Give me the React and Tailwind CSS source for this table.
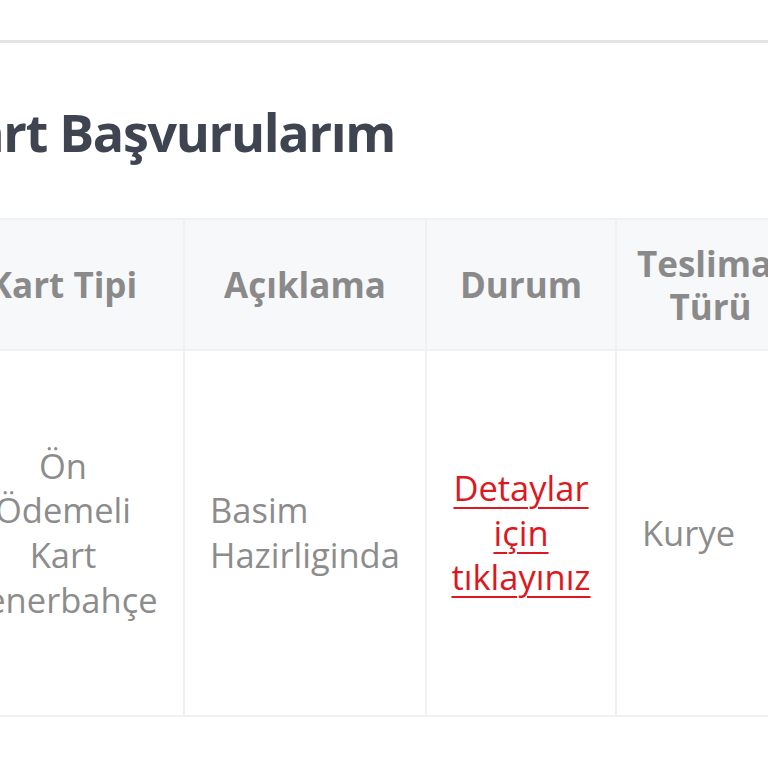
import React from "react";

export default function App() {
  const font = { fontFamily: '"Open Sans", "Noto Sans", sans-serif' };
  return (
    <div className="w-[768px] h-[768px] overflow-hidden bg-white" style={font}>
      <div className="h-[43px] border-b-[3px] border-[#e4e4e4]" />
      <div className="ml-[-60px] w-[900px]">
        <h1 className="mt-[63px] text-[52px] leading-none font-bold text-[#3e4551] tracking-[-1.3px]">
          Kart Başvurularım
        </h1>
      </div>
      <div className="ml-[-59px] mt-[60px]">
        <table className="border-collapse table-fixed w-[863px]">
          <colgroup>
            <col className="w-[242px]" />
            <col className="w-[242px]" />
            <col className="w-[190px]" />
            <col className="w-[189px]" />
          </colgroup>
          <thead>
            <tr className="h-[131px] bg-[#f7f8fa]">
              {["Kart Tipi", "Açıklama", "Durum", "Teslimat Türü"].map((h) => (
                <th
                  key={h}
                  className="border-2 border-[#f0f1f3] px-[20px] text-center align-middle text-[35px] leading-[43px] font-bold text-[#8a8a8a]"
                >
                  {h}
                </th>
              ))}
            </tr>
          </thead>
          <tbody>
            <tr className="h-[366px]">
              <td className="border-2 border-[#f0f1f3] px-[25px] text-center align-middle text-[34.5px] leading-[44.7px] text-[#8c8c8c]">
                Ön Ödemeli Kart Fenerbahçe
              </td>
              <td className="border-2 border-[#f0f1f3] px-[25px] text-left align-middle text-[34.5px] leading-[44.7px] text-[#8c8c8c]">
                Basim Hazirliginda
              </td>
              <td className="border-2 border-[#f0f1f3] px-[20px] text-center align-middle text-[34.5px] leading-[44.7px]">
                <a href="#" className="text-[#dc1820] underline decoration-[2px] underline-offset-[6px]">
                  Detaylar için tıklayınız
                </a>
              </td>
              <td className="border-2 border-[#f0f1f3] px-[25px] text-left align-middle text-[34.5px] leading-[44.7px] text-[#8c8c8c]">
                Kurye
              </td>
            </tr>
          </tbody>
        </table>
      </div>
    </div>
  );
}
